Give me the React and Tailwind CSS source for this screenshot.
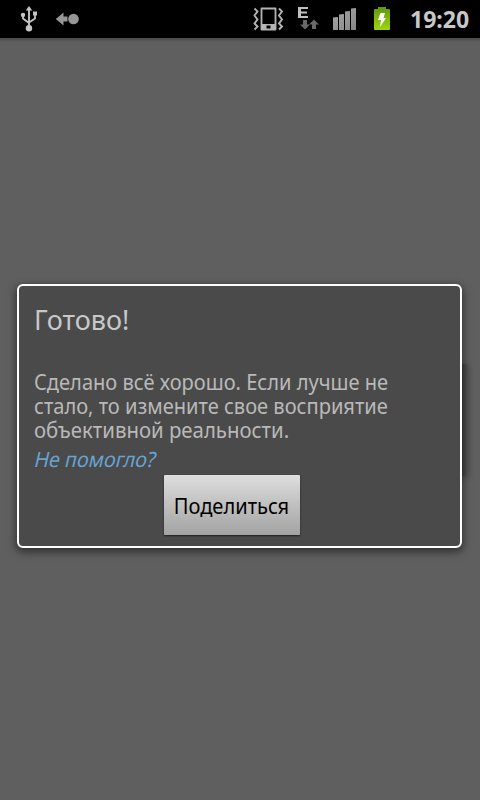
import React from "react";

const message = [
    { text: "Сделано всё хорошо. Если лучше не", fit: "scale-x-[0.956]" },
    { text: "стало, то измените свое восприятие", fit: "scale-x-[0.956]" },
    { text: "объективной реальности.", fit: "scale-x-[0.97]" },
];

function UsbIcon() {
    return (
        <svg className="ml-5 h-[26px] w-[18px]" viewBox="0 0 18 26" fill="none">
            <path d="M9 4v18" stroke="#c4c4c4" strokeWidth="1.9" />
            <path d="M5.700 4.500 9 0l3.300 4.500z" fill="#c4c4c4" />
            <path
                d="M3 9v3.500l6 4.500M15 8v4.500l-6 4"
                stroke="#c4c4c4"
                strokeWidth="1.8"
            />
            <circle cx="3" cy="9" r="2.2" fill="#c4c4c4" />
            <path d="M13 5.500h4v4h-4z" fill="#c4c4c4" />
            <circle cx="9" cy="22.300" r="3.200" fill="#c4c4c4" />
        </svg>
    );
}

function TetherIcon() {
    return (
        <svg className="ml-[17px] h-[14px] w-6" viewBox="0 0 24 14" fill="#969696">
            <path d="M0.800 7 8.500 0.500v4h4v5h-4v4z" />
            <circle cx="18.500" cy="7" r="5.300" />
        </svg>
    );
}

function VibrateIcon() {
    return (
        <svg className="h-6 w-8" viewBox="0 0 32 24" fill="none">
            <path
                d="M8.500 1.500h14v21h-14z"
                stroke="#b4b4b4"
                strokeWidth="1.800"
                strokeLinejoin="round"
            />
            <path d="M8 17h15v6H8z" fill="#b4b4b4" />
            <path d="M13.500 18.500h4v3h-4z" fill="#000" />
            <path
                d="M1.500 1.500l3 3-3 4 3 4-3 4 3 3-3 3M26 1.500l3 3-3 4 3 4-3 4 3 3-3 3"
                stroke="#b4b4b4"
                strokeWidth="1.900"
            />
        </svg>
    );
}

function EdgeIcon() {
    return (
        <svg className="ml-[13px] h-6 w-[22px]" viewBox="0 0 22 24">
            <path d="M0 0h10v2H3v2.500h6v2H3V9h7v2H0z" fill="#c0c0c0" />
            <path d="M5 13h4v4.500h3L7 22.500l-5-5h3z" fill="#686868" />
            <path d="M14 22h4v-4.500h3l-5-5-5 5h3z" fill="#686868" />
        </svg>
    );
}

function SignalIcon() {
    return (
        <svg className="ml-[13px] h-[22px] w-6" viewBox="0 0 24 22" fill="url(#bars)">
            <defs>
                <linearGradient id="bars" x1="0" y1="0" x2="1" y2="1">
                    <stop stopColor="#aaaaaa" />
                    <stop offset="1" stopColor="#858585" />
                </linearGradient>
            </defs>
            <path d="M0 9.500l5-.500V22H0zM6 6.500l5-.500V22H6zM12 3.500l5-.500V22h-5zM18 .500l5-.500v22h-5z" />
        </svg>
    );
}

function BatteryIcon() {
    return (
        <svg className="ml-[15px] h-7 w-5" viewBox="0 0 20 28">
            <defs>
                <linearGradient id="charge" x1="0" y1="0" x2="0" y2="1">
                    <stop stopColor="#5f9410" />
                    <stop offset="0.500" stopColor="#80b80c" />
                    <stop offset="1" stopColor="#a0d510" />
                </linearGradient>
            </defs>
            <path
                d="M3 4h3V2h8v2h3q1 0 1 1v19q0 1-1 1H3q-1 0-1-1V5q0-1 1-1z"
                fill="url(#charge)"
            />
            <path d="M8.500 8H13l-1.500 5H14L8 22l1-7H6z" fill="#fff" />
        </svg>
    );
}

function StatusBar() {
    return (
        <div className="flex h-[38px] items-center justify-between bg-black">
            <div className="flex items-center">
                <UsbIcon />
                <TetherIcon />
            </div>
            <div className="flex items-center pr-[11px]">
                <VibrateIcon />
                <EdgeIcon />
                <SignalIcon />
                <BatteryIcon />
                <span className="ml-[18px] w-[59px] origin-left scale-x-[0.96] whitespace-nowrap text-2xl leading-[38px] font-bold text-[#c8c8c8]">
                    19:20
                </span>
            </div>
        </div>
    );
}

function Dialog() {
    return (
        <div className="relative mx-[17px] mt-[242px] w-[445px]">
            <div className="absolute top-[80px] -right-[6px] h-[112px] w-10 rounded bg-linear-to-l from-[#525252] from-0% to-[#3a3a3a] to-20% shadow-[0_1px_5px_2px_rgba(0,0,0,0.17)]" />
            <div className="relative flex h-[264px] flex-col rounded-[6px] border-2 border-white bg-[#4a4a4a] px-[15px] shadow-[0_3px_9px_1px_rgba(0,0,0,0.5)]">
                <h1 className="mt-4 h-9 text-[27px] leading-9 text-[#c8c8c8]">
                    Готово!
                </h1>
                <div className="mt-8 text-[21px] leading-6 text-[#b9b9b9]">
                    {message.map((line) => (
                        <p
                            key={line.text}
                            className={`origin-left whitespace-nowrap ${line.fit}`}
                        >
                            {line.text}
                        </p>
                    ))}
                </div>
                <a className="mt-1 h-[27px] origin-left scale-x-[0.94] -skew-x-14 self-start pl-px text-[21px] leading-[27px] text-[#66a3d2]">
                    Не помогло?
                </a>
                <button className="mt-[2px] ml-[130px] h-[60px] w-[136px] rounded-[1px] bg-linear-to-b from-[#dedede] to-[#a3a3a3] text-[21px] text-black shadow-[0_1px_2px_rgba(0,0,0,0.6)]">
                    <span className="-mx-4 inline-block scale-x-[0.955] pt-1 pr-[2px] whitespace-nowrap">
                        Поделиться
                    </span>
                </button>
            </div>
        </div>
    );
}

export default function App() {
    return (
        <div className="h-[800px] w-[480px] overflow-hidden bg-[#5f5f5f] font-['Noto_Sans','Open_Sans',sans-serif]">
            <StatusBar />
            <div className="h-1 bg-linear-to-b from-[#484848] to-[#5f5f5f]" />
            <Dialog />
        </div>
    );
}
